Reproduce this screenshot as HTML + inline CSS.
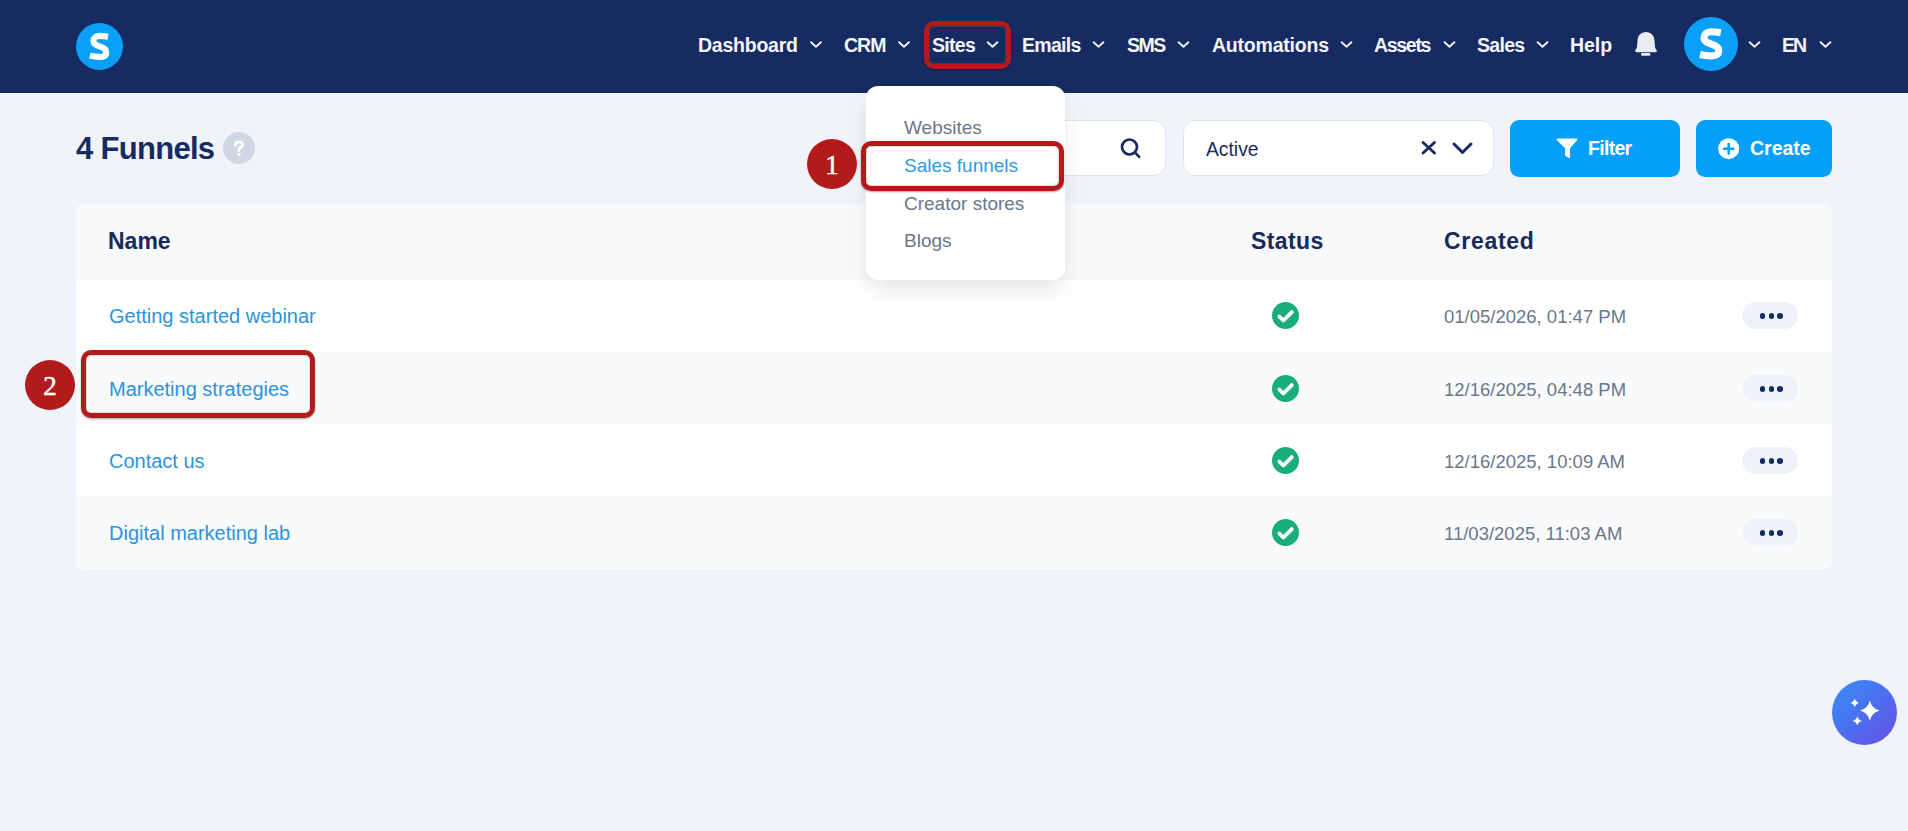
<!DOCTYPE html>
<html><head><meta charset="utf-8">
<style>
*{margin:0;padding:0;box-sizing:border-box;}
html,body{width:1908px;height:831px;overflow:hidden;background:#f0f3f8;font-family:"Liberation Sans",sans-serif;}
.a{position:absolute;white-space:nowrap;line-height:1;}
#hdr{position:absolute;left:0;top:0;width:1908px;height:93px;background:#172b63;}
.nav{color:#f3f5fa;font-weight:bold;font-size:19.5px;}
.chev{position:absolute;}
.logo{position:absolute;border-radius:50%;background:#0ba0f7;}
.tbl{position:absolute;left:76px;top:204px;width:1756px;height:365px;border-radius:8px;overflow:hidden;background:#fff;}
.row{position:absolute;left:0;width:1756px;}
.th{color:#162a5c;font-weight:bold;font-size:23px;}
.lnk{color:#2b93dd;font-size:20px;}
.dt{color:#6b7789;font-size:18.5px;}
.chk{position:absolute;width:27px;height:27px;}
.dots{position:absolute;width:56px;height:27px;border-radius:14px;background:#eff2f8;}
.dots i{position:absolute;top:11px;width:5.5px;height:5.5px;border-radius:50%;background:#172b63;}
.dd{color:#6a788c;font-size:19px;}
.redbox{position:absolute;border:5px solid #b31b1b;border-radius:10px;box-shadow:0 1px 2px rgba(0,0,0,.35), inset 0 0 0 1px rgba(120,120,120,.25);}
.redc{position:absolute;width:50px;height:50px;border-radius:50%;background:#b31b1b;color:#fff;font-family:"Liberation Serif",serif;font-size:27px;text-align:center;-webkit-text-stroke:0.5px #fff;}
</style></head>
<body>
<div id="hdr"></div>
<!-- logo -->
<svg class="a" style="left:76px;top:23px" width="47" height="47" viewBox="0 0 54 54"><circle cx="27" cy="27" r="27" fill="#0ba0f7"/><path transform="translate(6 5.3)" d="M30.8 10.4C27 9.7 24 9.5 21 9.5 16.5 9.5 14 12.3 14 15.5 14 19.5 18 20.8 22 22 26 23.2 28.8 24.8 28.8 28.5 28.8 32 26 33.6 21.5 33.6 17.5 33.6 13.5 33 10 32.2" fill="none" stroke="#fff" stroke-width="7"/></svg>

<!-- nav -->
<div class="a nav" style="left:698px;top:36px;letter-spacing:-0.24px">Dashboard</div>
<div class="a nav" style="left:844px;top:36px;letter-spacing:-1px">CRM</div>
<div class="a nav" style="left:932px;top:36px;letter-spacing:-0.7px">Sites</div>
<div class="a nav" style="left:1022px;top:36px;letter-spacing:-0.7px">Emails</div>
<div class="a nav" style="left:1127px;top:36px;letter-spacing:-1.5px">SMS</div>
<div class="a nav" style="left:1212px;top:36px;letter-spacing:-0.21px">Automations</div>
<div class="a nav" style="left:1374px;top:36px;letter-spacing:-1.3px">Assets</div>
<div class="a nav" style="left:1477px;top:36px;letter-spacing:-0.7px">Sales</div>
<div class="a nav" style="left:1570px;top:36px;letter-spacing:-0.07px">Help</div>
<div class="a nav" style="left:1782px;top:36px;letter-spacing:-2px">EN</div>

<svg class="a" style="left:0;top:0" width="1908" height="92">
 <g fill="none" stroke="#eef1f8" stroke-width="1.9" stroke-linecap="round" stroke-linejoin="round">
  <path d="M811.1 42.2l4.9 4.6 4.9-4.6"/>
  <path d="M899.1 42.2l4.9 4.6 4.9-4.6"/>
  <path d="M987.6 42.2l4.9 4.6 4.9-4.6"/>
  <path d="M1093.6 42.2l4.9 4.6 4.9-4.6"/>
  <path d="M1178.6 42.2l4.9 4.6 4.9-4.6"/>
  <path d="M1341.6 42.2l4.9 4.6 4.9-4.6"/>
  <path d="M1444.6 42.2l4.9 4.6 4.9-4.6"/>
  <path d="M1537.6 42.2l4.9 4.6 4.9-4.6"/>
  <path d="M1749.6 42.2l4.9 4.6 4.9-4.6"/>
  <path d="M1820.6 42.2l4.9 4.6 4.9-4.6"/>
 </g>
 <!-- bell -->
 <path fill="#e9ecf3" d="M1646 32C1650.8 32 1654.3 35.5 1654.5 40.5L1655 47C1655.2 48.5 1656.6 49.4 1656.8 50.6 1657 51.6 1656.4 52.3 1655.4 52.3L1636.6 52.3C1635.6 52.3 1635 51.6 1635.2 50.6 1635.4 49.4 1636.8 48.5 1637 47L1637.5 40.5C1637.7 35.5 1641.2 32 1646 32Z"/>
 <rect x="1641" y="53" width="9.4" height="2.8" rx="1.4" fill="#e9ecf3"/>
</svg>

<!-- avatar -->
<svg class="a" style="left:1684px;top:17px" width="54" height="54" viewBox="0 0 54 54"><circle cx="27" cy="27" r="27" fill="#0ba0f7"/><path transform="translate(6 5.3)" d="M30.8 10.4C27 9.7 24 9.5 21 9.5 16.5 9.5 14 12.3 14 15.5 14 19.5 18 20.8 22 22 26 23.2 28.8 24.8 28.8 28.5 28.8 32 26 33.6 21.5 33.6 17.5 33.6 13.5 33 10 32.2" fill="none" stroke="#fff" stroke-width="7"/></svg>

<!-- red box around Sites -->
<div class="redbox" style="left:924px;top:21px;width:87px;height:48px;"></div>

<!-- title -->
<div class="a" style="left:76px;top:133px;font-size:31px;letter-spacing:-0.7px;font-weight:bold;color:#172b63;">4 Funnels</div>
<div class="a" style="left:223px;top:132px;width:32px;height:32px;border-radius:50%;background:#ced7e2;"></div>
<svg class="a" style="left:223px;top:132px" width="32" height="32" viewBox="0 0 32 32"><path d="M12.5 13.2C12.5 11 14 9.9 16 9.9 18 9.9 19.5 11.1 19.5 12.9 19.5 14.9 17.3 15.4 16.3 16.7 16 17.1 16 17.6 16 18.6" fill="none" stroke="#fff" stroke-width="2.9" stroke-linecap="round"/><circle cx="16" cy="22.6" r="1.75" fill="#fff"/></svg>

<!-- search -->
<div class="a" style="left:900px;top:120px;width:266px;height:56px;background:#fff;border:1px solid #e1e6ed;border-radius:12px;"></div>
<svg class="a" style="left:1118px;top:136px" width="26" height="26" viewBox="0 0 26 26"><circle cx="11.5" cy="11" r="7.5" fill="none" stroke="#172b63" stroke-width="2.7"/><path d="M17 16.5l4.2 4.4" stroke="#172b63" stroke-width="2.6" stroke-linecap="round"/></svg>

<!-- active select -->
<div class="a" style="left:1183px;top:120px;width:311px;height:56px;background:#fff;border:1px solid #e1e6ed;border-radius:12px;"></div>
<div class="a" style="left:1206px;top:140px;font-size:19.3px;color:#172b63;">Active</div>
<svg class="a" style="left:1415px;top:135px" width="65" height="26" viewBox="0 0 65 26">
 <path d="M8 7.5l11.5 10.5M19.5 7.5L8 18" stroke="#172b63" stroke-width="2.9" stroke-linecap="round" fill="none"/>
 <path d="M39 9l8.5 8.5L56 9" stroke="#172b63" stroke-width="3" stroke-linecap="round" stroke-linejoin="round" fill="none"/>
</svg>

<!-- filter button -->
<div class="a" style="left:1510px;top:120px;width:170px;height:57px;background:#06a0fb;border-radius:9px;"></div>
<svg class="a" style="left:1556px;top:137px" width="22" height="22" viewBox="0 0 22 22"><path fill="#fff" d="M1.5 1.5h19c.8 0 1.2.9.7 1.5L14 11.2v9.3c0 .6-.6.9-1.1.6l-3.3-2.1c-.3-.2-.5-.5-.5-.9V11.2L.8 3c-.5-.6-.1-1.5.7-1.5z"/></svg>
<div class="a" style="left:1588px;top:139px;font-size:19.5px;font-weight:bold;color:#fff;letter-spacing:-0.7px">Filter</div>

<!-- create button -->
<div class="a" style="left:1696px;top:120px;width:136px;height:57px;background:#06a0fb;border-radius:9px;"></div>
<svg class="a" style="left:1718px;top:138px" width="22" height="22" viewBox="0 0 22 22"><circle cx="10.7" cy="10.7" r="10.5" fill="#fff"/><path d="M10.7 6v9.4M6 10.7h9.4" stroke="#06a0fb" stroke-width="2.6" stroke-linecap="round"/></svg>
<div class="a" style="left:1750px;top:139px;font-size:19.5px;font-weight:bold;color:#fff;">Create</div>

<!-- table -->
<div class="tbl">
 <div class="row" style="top:0;height:76px;background:#f7f9fb;"></div>
 <div class="row" style="top:76px;height:72px;background:#fff;"></div>
 <div class="row" style="top:148px;height:72px;background:#f8fafc;"></div>
 <div class="row" style="top:220px;height:72px;background:#fff;"></div>
 <div class="row" style="top:292px;height:73px;background:#f8fafc;"></div>
</div>
<div class="a th" style="left:108px;top:230px;">Name</div>
<div class="a th" style="left:1251px;top:230px;letter-spacing:0.4px">Status</div>
<div class="a th" style="left:1444px;top:230px;letter-spacing:0.7px">Created</div>

<div class="a lnk" style="left:109px;top:306px;">Getting started webinar</div>
<div class="a lnk" style="left:109px;top:379px;">Marketing strategies</div>
<div class="a lnk" style="left:109px;top:451px;">Contact us</div>
<div class="a lnk" style="left:109px;top:523px;">Digital marketing lab</div>

<div class="a dt" style="left:1444px;top:308px;">01/05/2026, 01:47 PM</div>
<div class="a dt" style="left:1444px;top:381px;">12/16/2025, 04:48 PM</div>
<div class="a dt" style="left:1444px;top:453px;">12/16/2025, 10:09 AM</div>
<div class="a dt" style="left:1444px;top:525px;">11/03/2025, 11:03 AM</div>

<svg class="a" style="left:0;top:0" width="1908" height="831">
 <defs><g id="ck"><circle cx="13.5" cy="13.5" r="13.5" fill="#1bac7e"/><path d="M7.4 14.6l4 3.9 8.4-8.4" fill="none" stroke="#fff" stroke-width="3.8" stroke-linecap="round" stroke-linejoin="round"/></g></defs>
 <use href="#ck" x="1272" y="302"/>
 <use href="#ck" x="1272" y="375"/>
 <use href="#ck" x="1272" y="447"/>
 <use href="#ck" x="1272" y="519"/>
</svg>

<div class="dots" style="left:1742px;top:302px;"><i style="left:17.7px"></i><i style="left:26.5px"></i><i style="left:35.4px"></i></div>
<div class="dots" style="left:1742px;top:375px;"><i style="left:17.7px"></i><i style="left:26.5px"></i><i style="left:35.4px"></i></div>
<div class="dots" style="left:1742px;top:447px;"><i style="left:17.7px"></i><i style="left:26.5px"></i><i style="left:35.4px"></i></div>
<div class="dots" style="left:1742px;top:519px;"><i style="left:17.7px"></i><i style="left:26.5px"></i><i style="left:35.4px"></i></div>

<!-- dropdown -->
<div class="a" style="left:866px;top:86px;width:199px;height:194px;background:#fff;border-radius:12px;box-shadow:0 12px 24px -4px rgba(0,0,0,.12);"></div>
<div class="a dd" style="left:904px;top:118px;">Websites</div>
<div class="a dd" style="left:904px;top:156px;color:#2d9be6;">Sales funnels</div>
<div class="a dd" style="left:904px;top:194px;">Creator stores</div>
<div class="a dd" style="left:904px;top:231px;">Blogs</div>

<!-- annotations -->
<div class="redbox" style="left:861px;top:141px;width:203px;height:50px;"></div>
<div class="redc" style="left:807px;top:139px;line-height:52px;">1</div>
<div class="redbox" style="left:81px;top:350px;width:234px;height:68px;"></div>
<div class="redc" style="left:25px;top:360px;line-height:52px;">2</div>

<!-- AI button -->
<div class="a" style="left:1832px;top:680px;width:65px;height:65px;border-radius:50%;background:linear-gradient(135deg,#3b8ff6 0%,#4a6ff0 50%,#6c4fe0 100%);"></div>
<svg class="a" style="left:1832px;top:680px" width="65" height="65" viewBox="0 0 65 65">
 <path fill="#fff" d="M37.80 20.40Q39.76 28.56 47.60 30.60Q39.76 32.64 37.80 40.80Q35.84 32.64 28.00 30.60Q35.84 28.56 37.80 20.40Z"/>
 <path fill="#fff" d="M22.80 18.60Q23.68 22.12 27.20 23.00Q23.68 23.88 22.80 27.40Q21.92 23.88 18.40 23.00Q21.92 22.12 22.80 18.60Z"/>
 <path fill="#fff" d="M25.30 36.30Q26.22 39.98 29.90 40.90Q26.22 41.82 25.30 45.50Q24.38 41.82 20.70 40.90Q24.38 39.98 25.30 36.30Z"/>
</svg>
</body></html>
